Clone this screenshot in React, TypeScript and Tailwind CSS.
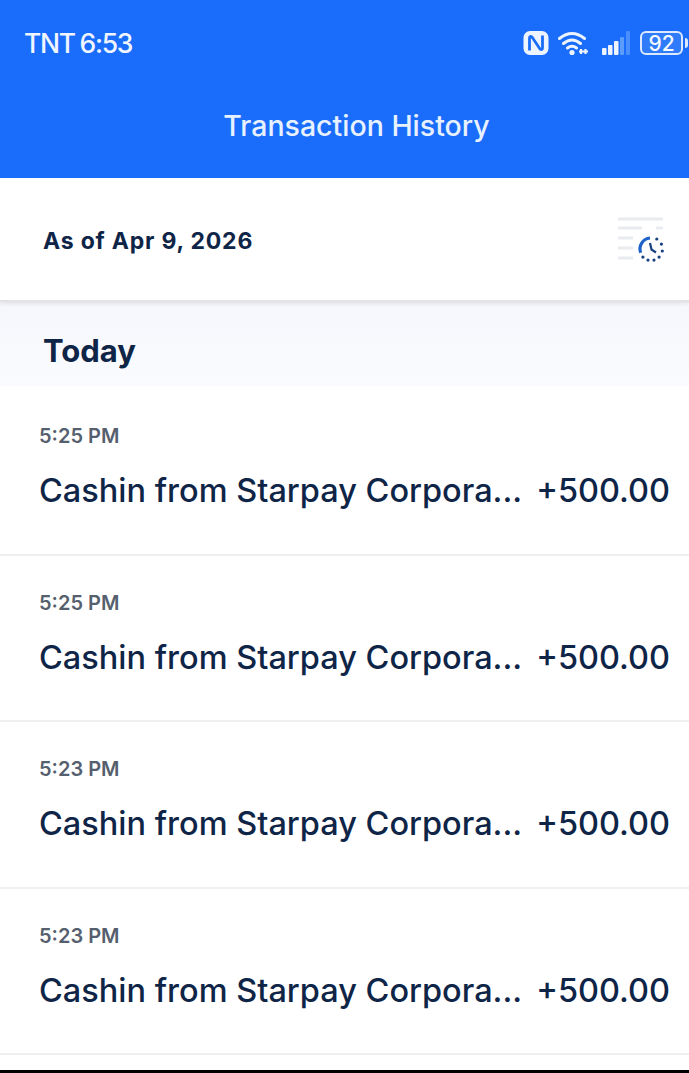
const font = "font-['Inter','Liberation_Sans',sans-serif]";

const transactions = [
  { time: "5:25 PM", amount: "+500.00" },
  { time: "5:25 PM", amount: "+500.00" },
  { time: "5:23 PM", amount: "+500.00" },
  { time: "5:23 PM", amount: "+500.00" },
];

const StatusIcons = () => (
  <div className="flex items-center pr-px">
    {/* NFC */}
    <svg width="26" height="26" viewBox="0 0 26 26" className="mr-[9px]">
      <rect x="0.500" y="1" width="25" height="24" rx="6.500" fill="#eef4ff" />
      <path d="M6.500 20.500V8q0-2.500 2.500-1l8 12q2.500 1.500 2.500-1V5.500" fill="none" stroke="#1a6dfa" strokeWidth="2.800" />
    </svg>
    {/* wifi */}
    <svg width="30" height="26" viewBox="0 0 30 26" className="mr-[14px]">
      <path d="M1.500 8.500q12.500-10 25 0M5.500 13.500q8.500-7 17 0M9.500 18q4.500-3.500 9 0" fill="none" stroke="#eef4ff" strokeWidth="3" strokeLinecap="round" />
      <circle cx="14" cy="22.500" r="2.600" fill="#eef4ff" />
      <path d="M21 21.500h9M23 19v5M27.500 19v5" fill="none" stroke="#eef4ff" strokeWidth="2.200" />
    </svg>
    {/* signal */}
    <svg width="28" height="26" viewBox="0 0 28 26" className="mr-[10px]">
      <rect x="0" y="18" width="4.500" height="7" rx="1" fill="#eef4ff" />
      <rect x="6" y="15" width="4.500" height="10" rx="1" fill="#eef4ff" />
      <rect x="12" y="11" width="4.500" height="14" rx="1" fill="#eef4ff" />
      <rect x="18" y="7" width="4" height="18" rx="1" fill="#5c9cfb" />
      <rect x="24" y="1" width="4" height="24" rx="1" fill="#4a8ffb" />
    </svg>
    {/* battery */}
    <div className="flex items-center">
      <div className="flex h-[24px] w-[43px] items-center justify-center rounded-[6px] border-[2.500px] border-[#dbe8ff] bg-[#2f7bfa] text-[21px] leading-none font-medium text-[#f4f8ff]">
        92
      </div>
      <div className="ml-[2px] h-[10px] w-[3px] rounded-r-sm bg-[#dbe8ff]" />
    </div>
  </div>
);

const HistoryIcon = () => (
  <svg width="50" height="48" viewBox="0 0 50 48">
    <g stroke="#e9ebee" strokeWidth="3">
      <path d="M3 4h45" />
      <path d="M3 13h24M41 13h7" />
      <path d="M3 23h15M3 33h15M3 43h15" />
    </g>
    <path d="M25.700 37.800A11 11 0 0 1 35 23" fill="none" stroke="#1e63c9" strokeWidth="3.200" />
    <path d="M35 28l1.500 6.500 4.500 3" fill="none" stroke="#17427f" strokeWidth="2.200" />
    <g fill="#17427f">
      <circle cx="41.800" cy="24" r="1.600" />
      <circle cx="46.400" cy="29.100" r="1.600" />
      <circle cx="47.300" cy="36" r="1.600" />
      <circle cx="44.100" cy="42.100" r="1.600" />
      <circle cx="39" cy="45.100" r="1.600" />
      <circle cx="33" cy="45.100" r="1.600" />
      <circle cx="27.900" cy="42.100" r="1.600" />
    </g>
  </svg>
);

const Row = ({ time, amount }: { time: string; amount: string }) => (
  <div className="h-[166.500px] border-b-2 border-[#eeeff1] pr-[19px] pl-[39px]">
    <p className="pt-[35px] text-[20px] leading-6 font-semibold text-[#565f6e]">{time}</p>
    <div className="mt-[23px] flex items-center justify-between text-[32.500px] leading-10 font-medium text-[#0f2547]">
      <span>Cashin from Starpay Corpora...</span>
      <span>{amount}</span>
    </div>
  </div>
);

export default function App() {
  return (
    <div className={`flex h-[1073px] w-[689px] flex-col overflow-hidden bg-white ${font}`}>
      <header className="h-[178px] bg-[#1a6dfa]">
        <div className="flex items-center justify-between pt-[28px] pl-6">
          <span className="text-[26.500px] leading-[30px] font-medium tracking-[-1.300px] text-[#f0f5ff] [word-spacing:-1px]">TNT 6:53</span>
          <StatusIcons />
        </div>
        <h1 className="mt-[50px] pl-6 text-center text-[28.500px] leading-9 font-medium text-[#e8f1ff]">Transaction History</h1>
      </header>

      <div className="relative flex h-[124px] items-center justify-between border-b-[2px] border-[#e3e3e5] pr-[24px] pl-[43px] shadow-[0_2px_4px_rgba(0,0,0,0.08)]">
        <span className="mt-[4px] text-[23px] font-bold tracking-[0.8px] text-[#0f2547]">As of Apr 9, 2026</span>
        <HistoryIcon />
      </div>

      <div className="flex h-[84px] items-center bg-linear-to-b from-[#f5f7fc] to-[#fafbfe] pt-[14px] pl-[43px]">
        <h2 className="text-[31px] leading-10 font-bold text-[#0f2547]">Today</h2>
      </div>

      <div className="flex-1 pt-[3px]">
        {transactions.map((t, i) => (
          <Row key={i} time={t.time} amount={t.amount} />
        ))}
      </div>

      <div className="h-[3px] bg-black" />
    </div>
  );
}
